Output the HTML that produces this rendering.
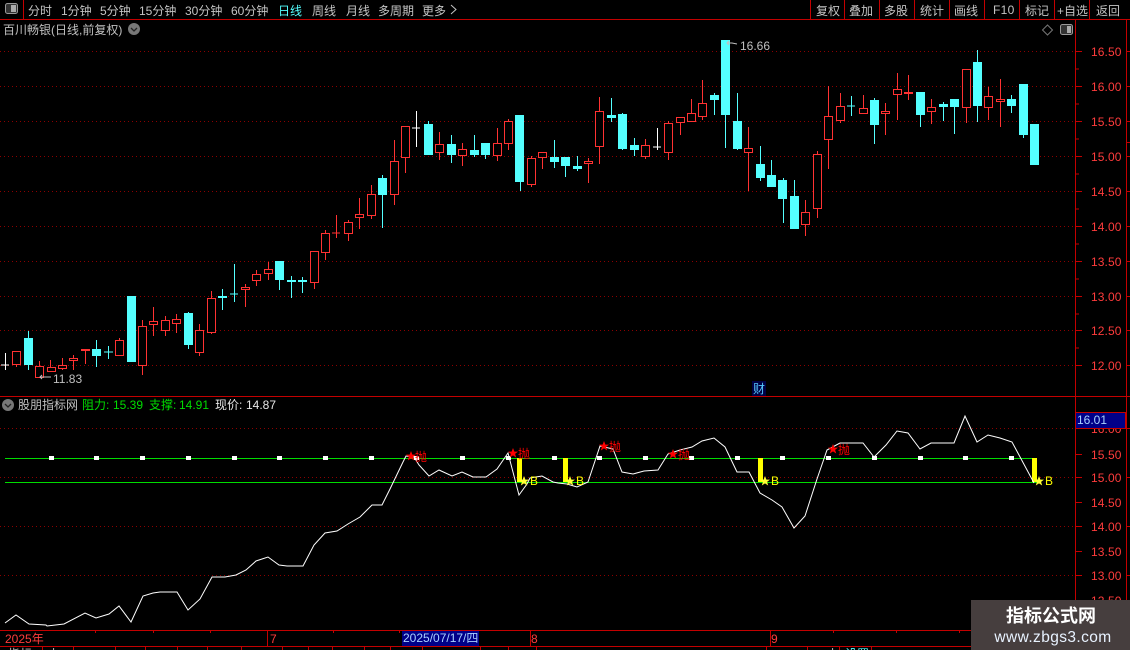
<!DOCTYPE html>
<html><head><meta charset="utf-8"><style>
html,body{margin:0;padding:0;background:#000;width:1130px;height:650px;overflow:hidden}
svg{display:block}
text{font-family:"Liberation Sans","WenQuanYi Zen Hei","Noto Sans CJK SC",sans-serif;font-size:12px}
.tb{fill:#c4c4c4}
.ax{fill:#ff3c3c;font-size:12px;letter-spacing:.1px}
</style></head><body>
<svg width="1130" height="650" viewBox="0 0 1130 650" xmlns="http://www.w3.org/2000/svg">
<rect width="1130" height="650" fill="#000"/>
<g shape-rendering="crispEdges">
<path fill="none" stroke="#8c0000" stroke-dasharray="1 3" d="M0 51.5H1075M0 86.5H1075M0 121.5H1075M0 156.5H1075M0 191.5H1075M0 226.5H1075M0 261.5H1075M0 296.5H1075M0 330.5H1075M0 365.5H1075M0 428.5H1075M0 477.5H1075M0 526.5H1075M0 575.5H1075"/>
<path fill="none" stroke="#c40000" d="M0 19.5H1130M23.5 0V19M810.5 0V19M844.5 0V19M879.5 0V19M914.5 0V19M949.5 0V19M984.5 0V19M1019.5 0V19M1054.5 0V19M1089.5 0V19M0 396.5H1130M0 630.5H1130M0 646.5H1130M1075.5 19V630M1126.5 19V630"/>
<path fill="none" stroke="#c40000" d="M1076 51.5h6M1076 69h3M1076 86.5h6M1076 104h3M1076 121.5h6M1076 139h3M1076 156.5h6M1076 174h3M1076 191.5h6M1076 209h3M1076 226.5h6M1076 244h3M1076 261.5h6M1076 279h3M1076 296.5h6M1076 314h3M1076 330.5h6M1076 348h3M1076 365.5h6M1076 454.5h6M1076 477.5h6M1076 502.5h6M1076 526.5h6M1076 551.5h6M1076 575.5h6M1127 51.5h3M1127 86.5h3M1127 121.5h3M1127 142.5h3M1127 156.5h3M1127 191.5h3M1127 226.5h3M1127 261.5h3M1127 296.5h3M1127 330.5h3M1127 365.5h3M1127 428.5h3M1127 477.5h3M1127 526.5h3M1127 575.5h3M95.5 630v3M153.5 630v3M210.5 630v3M267.5 630v16M333.5 630v3M399.5 630v3M530.5 630v16M770.5 630v16M833.5 630v3M896.5 630v3M959.5 630v3M42.5 646v4M73.5 646v4M115.5 646v4M145.5 646v4M177.5 646v4M207.5 646v4M241.5 646v4M282.5 646v4M308.5 646v4M332.5 646v4M364.5 646v4M390.5 646v4M422.5 646v4M480.5 646v4M508.5 646v4M536.5 646v4M766.5 646v4M807.5 646v4M839.5 646v4M871.5 646v4"/>

<!-- wicks -->
<path fill="none" stroke="#ff3232" d="M16.5 365V367M39.5 361V378M50.5 360V372M62.5 358V370M73.5 355V370M85.5 349V364M119.5 338V356M142.5 320V375M153.5 307V336M165.5 316V336M176.5 314V333M199.5 324V356M211.5 291V334M245.5 284V307M256.5 270V286M268.5 262V280M314.5 282V289M325.5 230V260M336.5 215V238M348.5 220V241M359.5 198V229M371.5 185V219M394.5 140V205M405.5 158V173M439.5 132V160M462.5 143V166M497.5 128V161M508.5 119V150M531.5 156V187M542.5 158V169M588.5 158V183M599.5 97V164M645.5 139V159M668.5 121V160M680.5 123V135M691.5 99V113M702.5 80V120M748.5 127V191M805.5 200V236M817.5 151V218M828.5 86V169M840.5 93V123M863.5 95V108M885.5 103V135M897.5 73V120M908.5 75V100M931.5 99V124M966.5 108V123M988.5 87V120M1000.5 79V127"/>
<path fill="none" stroke="#54ffff" d="M28.5 331V370M96.5 340V367M108.5 346V359M188.5 312V349M222.5 289V310M234.5 264V302M279.5 280V290M291.5 276V298M302.5 277V293M382.5 175V228M428.5 121V124M451.5 135V163M474.5 135V157M485.5 155V159M520.5 182V191M554.5 140V168M565.5 166V177M577.5 156V171M611.5 98V122M622.5 113V150M634.5 138V156M714.5 93V115M725.5 115V148M737.5 93V150M760.5 146V181M771.5 160V175M783.5 178V223M794.5 180V196M851.5 96V116M874.5 98V144M920.5 115V127M943.5 102V121M954.5 107V134M977.5 50V122M1011.5 95V113M1023.5 135V138"/>
<path fill="none" stroke="#fff" d="M5.5 353V370M416.5 111V147M657.5 128V150"/>

<!-- crosses -->
<path fill="none" stroke="#fff" d="M1 365H9M412 128H420M653 147H661"/>
<path fill="none" stroke="#54ffff" d="M104 352H113M230 294H238M847 106H855"/>
<path fill="none" stroke="#54ffff" stroke-width="2" d="M218 297H227M287 281H296M298 281H307"/>
<path fill="none" stroke="#ff3232" d="M332 233H340"/>
<path fill="#ff3232" d="M81 349h9v2h-9zM904 92h9v2h-9z"/>

<!-- hollow red -->
<g fill="#000" stroke="#ff3232">
<rect x="12.5" y="351.5" width="8" height="13"/><rect x="35.5" y="366.5" width="8" height="11"/><rect x="47.5" y="367.5" width="8" height="4"/><rect x="58.5" y="365.5" width="8" height="3"/><rect x="69.5" y="358.5" width="8" height="2"/><rect x="115.5" y="340.5" width="8" height="15"/><rect x="138.5" y="326.5" width="8" height="39"/><rect x="149.5" y="321.5" width="8" height="3"/><rect x="161.5" y="320.5" width="8" height="10"/><rect x="172.5" y="319.5" width="8" height="4"/><rect x="195.5" y="330.5" width="8" height="22"/><rect x="207.5" y="298.5" width="8" height="34"/><rect x="241.5" y="287.5" width="8" height="2"/><rect x="252.5" y="274.5" width="8" height="6"/><rect x="264.5" y="269.5" width="8" height="4"/><rect x="310.5" y="251.5" width="8" height="31"/><rect x="321.5" y="233.5" width="8" height="19"/><rect x="344.5" y="222.5" width="8" height="11"/><rect x="355.5" y="214.5" width="8" height="3"/><rect x="367.5" y="194.5" width="8" height="21"/><rect x="390.5" y="161.5" width="8" height="33"/><rect x="401.5" y="126.5" width="8" height="31"/><rect x="435.5" y="144.5" width="8" height="8"/><rect x="458.5" y="149.5" width="8" height="6"/><rect x="493.5" y="143.5" width="8" height="12"/><rect x="504.5" y="121.5" width="8" height="22"/><rect x="527.5" y="158.5" width="8" height="26"/><rect x="538.5" y="152.5" width="8" height="5"/><rect x="584.5" y="161.5" width="8" height="2"/><rect x="595.5" y="111.5" width="8" height="35"/><rect x="641.5" y="145.5" width="8" height="11"/><rect x="664.5" y="123.5" width="8" height="29"/><rect x="676.5" y="117.5" width="8" height="5"/><rect x="687.5" y="113.5" width="8" height="8"/><rect x="698.5" y="103.5" width="8" height="13"/><rect x="744.5" y="148.5" width="8" height="4"/><rect x="801.5" y="212.5" width="8" height="12"/><rect x="813.5" y="154.5" width="8" height="54"/><rect x="824.5" y="116.5" width="8" height="23"/><rect x="836.5" y="106.5" width="8" height="14"/><rect x="859.5" y="108.5" width="8" height="5"/><rect x="881.5" y="111.5" width="8" height="2"/><rect x="893.5" y="89.5" width="8" height="5"/><rect x="927.5" y="107.5" width="8" height="4"/><rect x="962.5" y="69.5" width="8" height="38"/><rect x="984.5" y="96.5" width="8" height="11"/><rect x="996.5" y="99.5" width="8" height="2"/>
</g>

<!-- cyan bodies -->
<g fill="#54ffff">
<rect x="24" y="338" width="9" height="27"/><rect x="92" y="349" width="9" height="7"/><rect x="127" y="296" width="9" height="66"/><rect x="184" y="313" width="9" height="32"/><rect x="275" y="261" width="9" height="19"/><rect x="378" y="178" width="9" height="17"/><rect x="424" y="124" width="9" height="31"/><rect x="447" y="144" width="9" height="11"/><rect x="470" y="150" width="9" height="5"/><rect x="481" y="143" width="9" height="12"/><rect x="515" y="115" width="9" height="67"/><rect x="550" y="157" width="9" height="5"/><rect x="561" y="157" width="9" height="9"/><rect x="573" y="166" width="9" height="3"/><rect x="607" y="115" width="9" height="3"/><rect x="618" y="114" width="9" height="35"/><rect x="630" y="145" width="9" height="5"/><rect x="710" y="95" width="9" height="5"/><rect x="721" y="40" width="9" height="75"/><rect x="733" y="121" width="9" height="28"/><rect x="756" y="164" width="9" height="14"/><rect x="767" y="175" width="9" height="12"/><rect x="778" y="180" width="9" height="19"/><rect x="790" y="196" width="9" height="33"/><rect x="870" y="100" width="9" height="25"/><rect x="916" y="92" width="9" height="23"/><rect x="939" y="104" width="9" height="3"/><rect x="950" y="99" width="9" height="8"/><rect x="973" y="62" width="9" height="44"/><rect x="1007" y="99" width="9" height="7"/><rect x="1019" y="84" width="9" height="51"/><rect x="1030" y="124" width="9" height="41"/>
</g>

<!-- sub pane -->
<path fill="none" stroke="#00dc00" d="M5 458.5H1037M5 482.5H1037"/>
<g fill="#fff">
<rect x="49" y="456" width="5" height="4"/><rect x="94" y="456" width="5" height="4"/><rect x="140" y="456" width="5" height="4"/><rect x="186" y="456" width="5" height="4"/><rect x="232" y="456" width="5" height="4"/><rect x="277" y="456" width="5" height="4"/><rect x="323" y="456" width="5" height="4"/><rect x="369" y="456" width="5" height="4"/><rect x="414" y="456" width="5" height="4"/><rect x="460" y="456" width="5" height="4"/><rect x="506" y="456" width="5" height="4"/><rect x="552" y="456" width="5" height="4"/><rect x="597" y="456" width="5" height="4"/><rect x="643" y="456" width="5" height="4"/><rect x="689" y="456" width="5" height="4"/><rect x="735" y="456" width="5" height="4"/><rect x="780" y="456" width="5" height="4"/><rect x="826" y="456" width="5" height="4"/><rect x="872" y="456" width="5" height="4"/><rect x="918" y="456" width="5" height="4"/><rect x="963" y="456" width="5" height="4"/><rect x="1009" y="456" width="5" height="4"/>
</g>
<g fill="#ffff00"><rect x="517" y="458" width="5" height="24"/><rect x="563" y="458" width="5" height="24"/><rect x="758" y="458" width="5" height="24"/><rect x="1032" y="458" width="5" height="24"/></g>
</g>

<polyline fill="none" stroke="#fff" stroke-width="1" points="5,623 16,615 29,624 46,625 47,626 64,624 85,613 96,618 109,614 119,606 131,622 143,596 153,593 160,592 177,592 188,610 200,599 212,577 225,577 236,575 246,570 256,561 268,557 279,565 287,566 303,566 314,545 325,533 337,531 348,524 360,517 372,505 382,505 390,489 403,462 406,456 414,457 419,465 429,476 439,470 452,476 462,472 473,477 486,477 497,469 508,453 519,495 527,484 530,478 542,476 553,482 558,483 567,484 577,487 588,482 600,446 613,449 622,472 633,474 644,471 658,470 668,454 680,450 692,447 702,441 714,438 725,447 737,472 749,472 760,493 772,500 782,507 794,528 805,516 817,479 827,450 840,443 863,443 874,457 886,445 897,431 908,433 920,449 931,443 954,443 965,416 977,442 988,435 1000,438 1012,442 1034,483"/>

<!-- stars -->
<g fill="#ff0000">
<polygon points="411,451 412.4,454.6 416,454.6 413.1,456.9 414.2,460.5 411,458.4 407.8,460.5 408.9,456.9 406,454.6 409.6,454.6"/>
<polygon points="513,448 514.4,451.6 518,451.6 515.1,453.9 516.2,457.5 513,455.4 509.8,457.5 510.9,453.9 508,451.6 511.6,451.6"/>
<polygon points="604,441 605.4,444.6 609,444.6 606.1,446.9 607.2,450.5 604,448.4 600.8,450.5 601.9,446.9 599,444.6 602.6,444.6"/>
<polygon points="673,449 674.4,452.6 678,452.6 675.1,454.9 676.2,458.5 673,456.4 669.8,458.5 670.9,454.9 668,452.6 671.6,452.6"/>
<polygon points="833,444 834.4,447.6 838,447.6 835.1,449.9 836.2,453.5 833,451.4 829.8,453.5 830.9,449.9 828,447.6 831.6,447.6"/>
</g>
<g fill="#ffff33">
<polygon points="524,476 525.4,479.6 529,479.6 526.1,481.9 527.2,485.5 524,483.4 520.8,485.5 521.9,481.9 519,479.6 522.6,479.6"/>
<polygon points="570,476 571.4,479.6 575,479.6 572.1,481.9 573.2,485.5 570,483.4 566.8,485.5 567.9,481.9 565,479.6 568.6,479.6"/>
<polygon points="765,476 766.4,479.6 770,479.6 767.1,481.9 768.2,485.5 765,483.4 761.8,485.5 762.9,481.9 760,479.6 763.6,479.6"/>
<polygon points="1039,476 1040.4,479.6 1044,479.6 1041.1,481.9 1042.2,485.5 1039,483.4 1035.8,485.5 1036.9,481.9 1034,479.6 1037.6,479.6"/>
</g>
<g fill="#ff0000">
<text x="415" y="461">抛</text><text x="518" y="458">抛</text><text x="609" y="451">抛</text><text x="678" y="459">抛</text><text x="838" y="454">抛</text>
</g>
<g fill="#ffff00">
<text x="530" y="485">B</text><text x="576" y="485">B</text><text x="771" y="485">B</text><text x="1045" y="485">B</text>
</g>

<!-- toolbar -->
<rect x="5.5" y="3.5" width="12" height="10" rx="2" fill="#333" stroke="#999"/><rect x="11" y="5" width="5" height="7" fill="#aaa"/>
<g class="tb">
<text x="28" y="15">分时</text><text x="61" y="15">1分钟</text><text x="100" y="15">5分钟</text><text x="139" y="15">15分钟</text><text x="185" y="15">30分钟</text><text x="231" y="15">60分钟</text>
<text x="278" y="15" style="fill:#54ffff">日线</text>
<text x="312" y="15">周线</text><text x="346" y="15">月线</text><text x="378" y="15">多周期</text><text x="422" y="15">更多</text>
<text x="816" y="15">复权</text><text x="849" y="15">叠加</text><text x="884" y="15">多股</text><text x="920" y="15">统计</text><text x="954" y="15">画线</text><text x="993" y="14" style="letter-spacing:.3px">F10</text><text x="1025" y="15">标记</text><text x="1057" y="15">+自选</text><text x="1096" y="15">返回</text>
</g>
<path fill="none" stroke="#c4c4c4" d="M451 5l5 4.5-5 4.5"/>

<!-- titles -->
<text x="3" y="34" fill="#c0c0c0">百川畅银(日线,前复权)</text>
<circle cx="134" cy="29" r="6" fill="#777"/><path fill="none" stroke="#222" stroke-width="1.3" d="M131 28l3 3 3-3"/>
<path fill="none" stroke="#777" d="M1047.5 25l5 5-5 5-5-5z"/>
<rect x="1060.5" y="24.5" width="12" height="10" rx="2" fill="#333" stroke="#999"/><rect x="1067" y="26" width="4" height="7" fill="#aaa"/>
<circle cx="8" cy="405" r="6" fill="#777"/><path fill="none" stroke="#222" stroke-width="1.3" d="M5 404l3 3 3-3"/>
<text x="18" y="409" fill="#c0c0c0">股朋指标网</text>
<g fill="#00dc00">
<text x="82" y="409">阻力:</text><text x="113" y="409">15.39</text>
<text x="149" y="409">支撑:</text><text x="179" y="409">14.91</text>
</g>
<g fill="#e6e6e6"><text x="215" y="409">现价:</text><text x="246" y="409">14.87</text></g>

<!-- annotations -->
<path fill="none" stroke="#c0c0c0" d="M51 377H40M42 375l-2 2 2 2"/>
<text x="53" y="383" fill="#c0c0c0">11.83</text>
<path fill="none" stroke="#c0c0c0" d="M737 44l-5-1h-5M729 41l-2 2 2 2"/>
<text x="740" y="50" fill="#c0c0c0">16.66</text>
<rect x="752" y="381" width="14" height="15" fill="#000044"/>
<text x="753" y="393" fill="#55c8ff">财</text>

<!-- axis labels -->
<g class="ax">
<text x="1091" y="56">16.50</text><text x="1091" y="91">16.00</text><text x="1091" y="126">15.50</text><text x="1091" y="161">15.00</text><text x="1091" y="196">14.50</text><text x="1091" y="231">14.00</text><text x="1091" y="266">13.50</text><text x="1091" y="301">13.00</text><text x="1091" y="335">12.50</text><text x="1091" y="370">12.00</text>
<text x="1091" y="433">16.00</text><text x="1091" y="459">15.50</text><text x="1091" y="482">15.00</text><text x="1091" y="507">14.50</text><text x="1091" y="531">14.00</text><text x="1091" y="556">13.50</text><text x="1091" y="580">13.00</text><text x="1091" y="605">12.50</text>
</g>
<rect x="1075.5" y="412.5" width="50" height="16" fill="#000088" stroke="#c40000" shape-rendering="crispEdges"/>
<text x="1077" y="424" fill="#a8d0ff">16.01</text>

<!-- time axis -->
<g fill="#ff3c3c">
<text x="5" y="643">2025年</text><text x="270" y="643">7</text><text x="531" y="643">8</text><text x="771" y="643">9</text>
</g>
<rect x="402" y="631" width="77" height="15" fill="#000088" shape-rendering="crispEdges"/>
<text x="403" y="642" fill="#a8d0ff">2025/07/17/四</text>
<g fill="#c0c0c0"><text x="8" y="658">指标</text><text x="48" y="658">上</text><text x="827" y="658">上</text></g>
<text x="845" y="658" fill="#54ffff">设置</text>

<!-- watermark -->
<rect x="971" y="600" width="159" height="50" fill="#463e3e"/>
<text x="1051" y="622" text-anchor="middle" fill="#fff" style="font-size:18px;font-family:'Noto Sans CJK SC',sans-serif;font-weight:700">指标公式网</text>
<text x="1053" y="642" text-anchor="middle" fill="#e8f2ff" style="font-size:15.5px;letter-spacing:.4px">www.zbgs3.com</text>
</svg>
</body></html>
